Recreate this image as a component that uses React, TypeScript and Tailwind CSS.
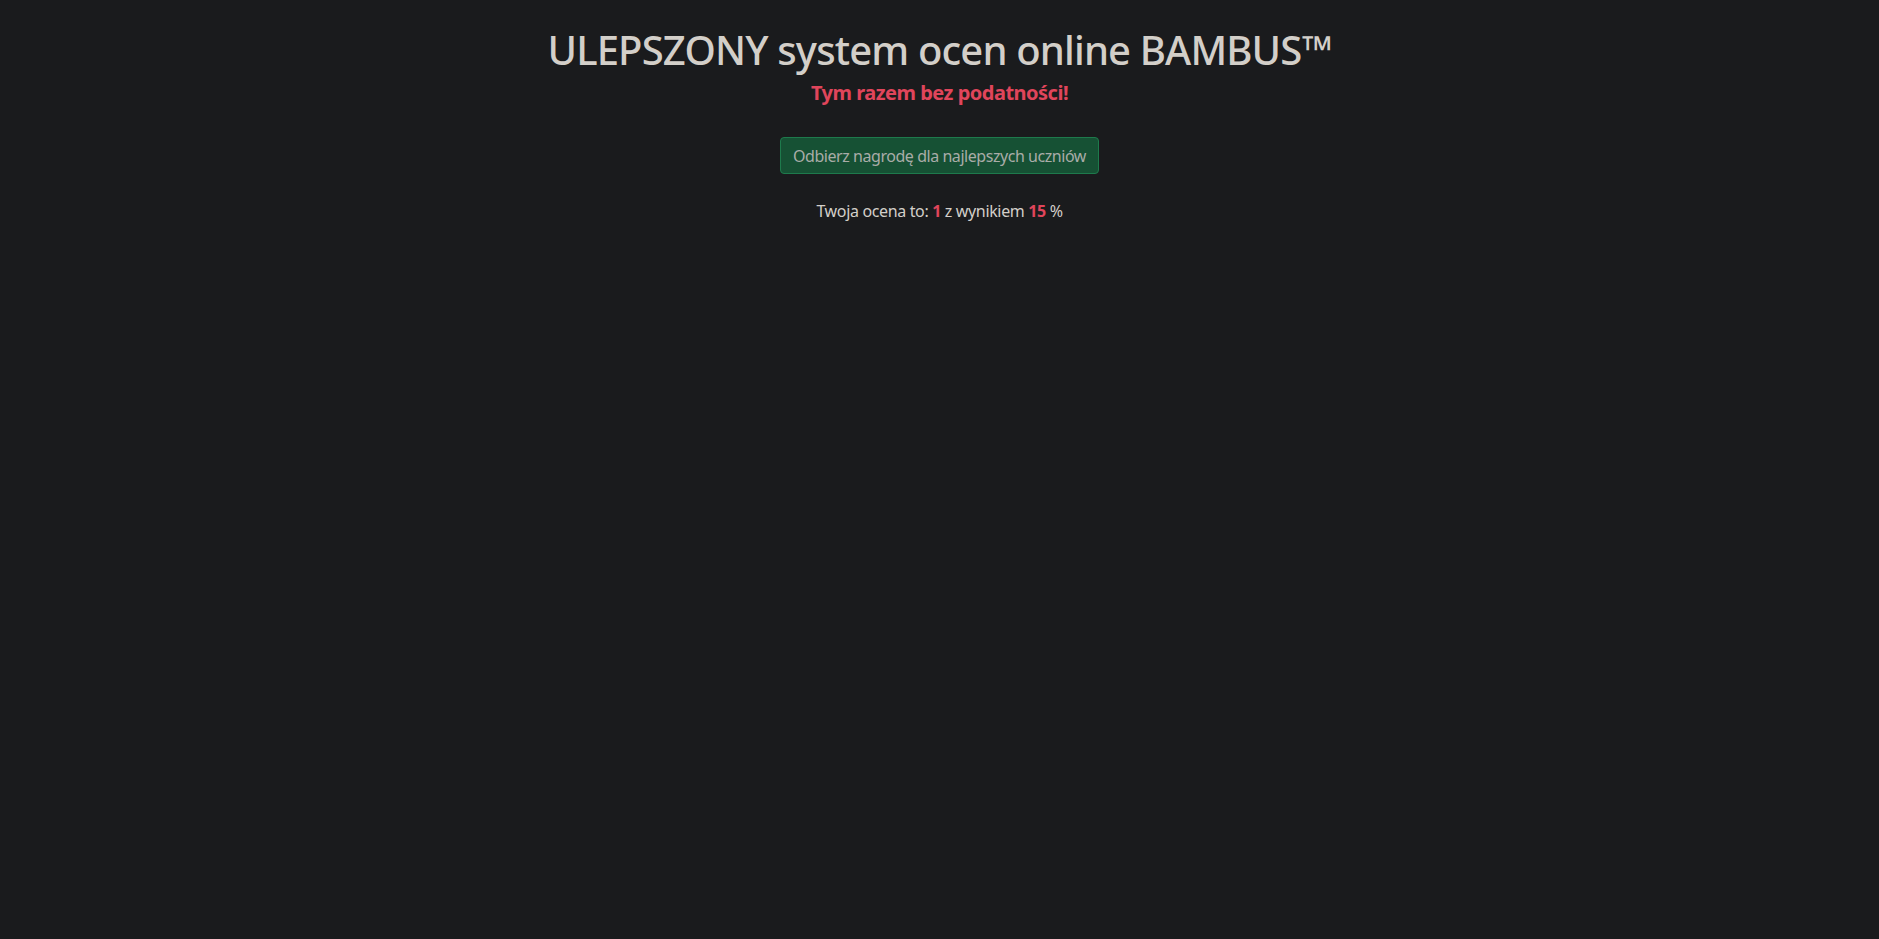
export default function App() {
  return (
    <div
      className="min-h-[939px] w-full bg-[#1a1b1d] text-[#d3cfc9] text-center"
      style={{ fontFamily: '"Noto Sans", "Open Sans", sans-serif' }}
    >
      <div className="pt-[26px] flex flex-col items-center">
        <h1 className="text-[40px] leading-[48px] font-medium tracking-[-0.85px] text-[#d3cfc9] m-0">
          ULEPSZONY system ocen online BAMBUS™
        </h1>
        <h5 className="mt-[7px] text-[20px] leading-[24px] font-bold tracking-[-0.5px] text-[#e0455b]">
          Tym razem bez podatności!
        </h5>
        <button className="mt-[32px] h-[37px] px-[12px] rounded-[4px] border border-[#1e7a4c] bg-[#165134] text-[#a9aca8] text-[16px] leading-[24px] tracking-[-0.45px]">
          Odbierz nagrodę dla najlepszych uczniów
        </button>
        <p className="mt-[25px] text-[16px] leading-[24px] tracking-[-0.35px] text-[#d3cfc9]">
          Twoja ocena to: <span className="font-bold text-[#e0455b]">1</span> z wynikiem{" "}
          <span className="font-bold text-[#e0455b]">15</span> %
        </p>
      </div>
    </div>
  );
}
